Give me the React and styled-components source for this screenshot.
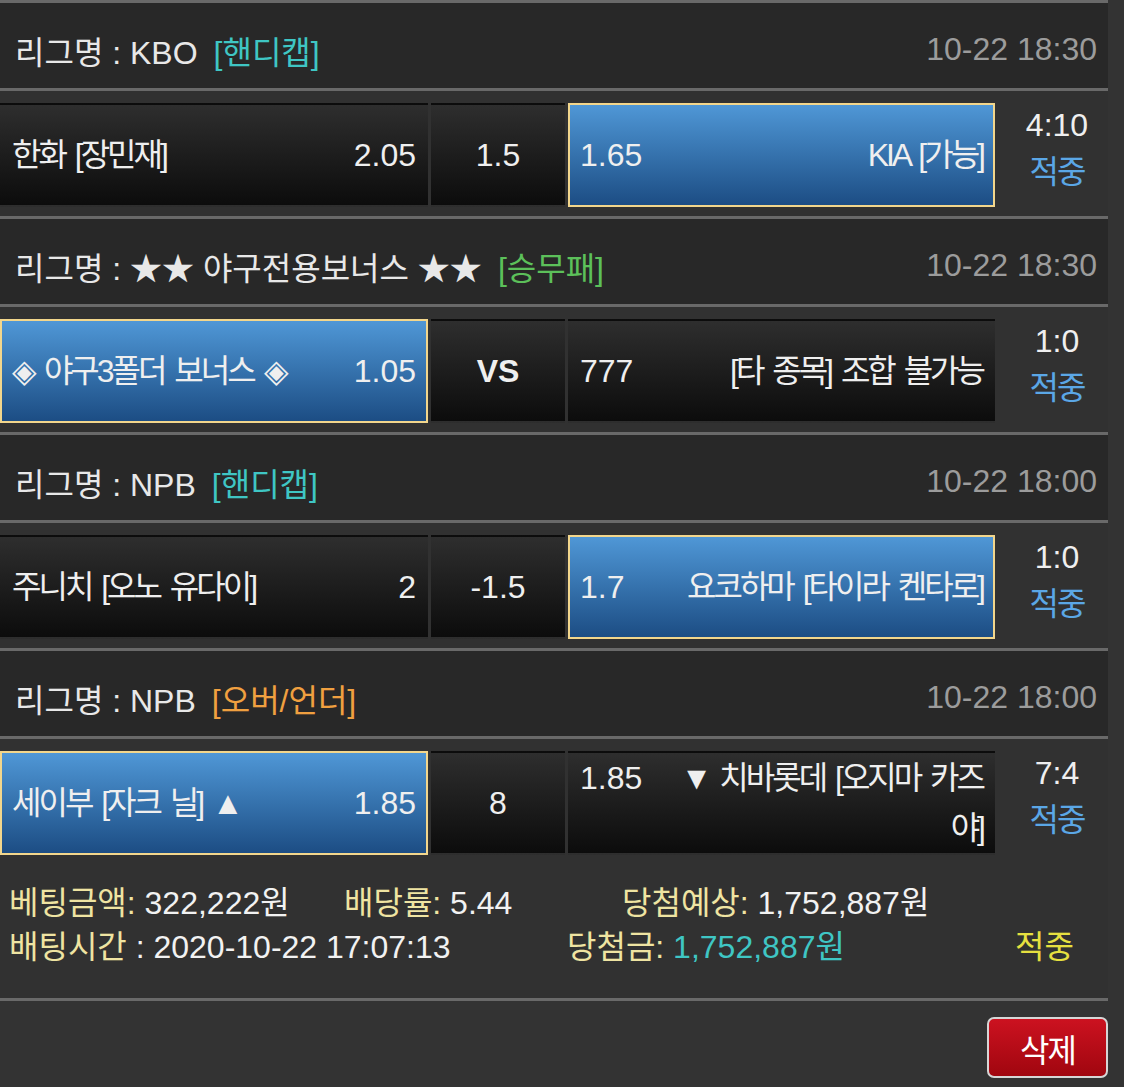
import React from "react";
import styled, { createGlobalStyle, css } from "styled-components";

const Global = createGlobalStyle`
  body {
    margin: 0;
    background: #333333;
    font-family: "Liberation Sans", "Noto Sans CJK KR", sans-serif;
    color: #efefef;
  }
`;

const Page = styled.div`
  width: 1108px;
  font-size: 32px;
`;

const Header = styled.div`
  display: flex;
  align-items: center;
  justify-content: space-between;
  box-sizing: border-box;
  height: 88px;
  padding: 8px 11px 0 15px;
  background: #282828;
  border-top: 3px solid #696969;
`;

const League = styled.span`
  color: #e8e8e8;
`;

const BetType = styled.span`
  color: ${(p) => p.$color};
  margin-left: 16px;
`;

const Date = styled.span`
  color: #9c9c9c;
`;

const Row = styled.div`
  display: flex;
  gap: 3px;
  padding: 12px 0 9px;
  background: #313131;
  border-top: 3px solid #696969;
`;

const Cell = styled.div`
  display: flex;
  align-items: center;
  justify-content: space-between;
  flex-shrink: 0;
  box-sizing: border-box;
  width: ${(p) => p.$w}px;
  height: 104px;
  padding: 0 10px;
  border: 2px solid transparent;
  background: linear-gradient(#2e2e2e, #0c0c0c);
  ${(p) =>
    p.$picked &&
    css`
      background: linear-gradient(#4f97d6, #1c4d84);
      border-color: #f2d68c;
    `}
`;

const Mid = styled(Cell)`
  justify-content: center;
  font-weight: ${(p) => (p.$bold ? 700 : 400)};
`;

const Pair = styled.div`
  display: flex;
  align-items: baseline;
  width: 100%;
  line-height: 50px;
`;

const Team = styled.span`
  flex: 1;
  letter-spacing: -3px;
  word-spacing: 4px;
  text-align: ${(p) => (p.$right ? "right" : "left")};
  margin-left: ${(p) => (p.$right ? "12px" : "0")};
`;

const Odds = styled.span`
  flex-shrink: 0;
`;

const Score = styled.div`
  display: flex;
  flex-direction: column;
  align-items: center;
  box-sizing: border-box;
  width: 110px;
  padding-left: 8px;
  margin-top: -1px;
  line-height: 47px;
`;

const Result = styled.span`
  color: ${(p) => p.$color};
  letter-spacing: -2px;
`;

const Summary = styled.div`
  padding: 17px 0 29px 9px;
  background: #313131;
  line-height: 44px;
`;

const SummaryLine = styled.div`
  display: flex;
`;

const Stat = styled.span`
  flex-shrink: 0;
  width: ${(p) => (p.$w ? `${p.$w}px` : "auto")};
  color: ${(p) => p.$color || "#f2f2f2"};
`;

const Label = styled.span`
  color: #efe4a2;
`;

const Footer = styled.div`
  display: flex;
  justify-content: flex-end;
  padding: 16px 0 10px;
  border-top: 3px solid #696969;
`;

const DeleteButton = styled.button`
  width: 121px;
  height: 61px;
  border: 2px solid #d6d6d6;
  border-radius: 7px;
  background: linear-gradient(#cc1220, #a0060f);
  color: #fff;
  font-family: inherit;
  font-size: 32px;
  letter-spacing: -2px;
`;

const games = [
  {
    league: "KBO",
    type: "[핸디캡]",
    typeColor: "#3fc6c4",
    date: "10-22 18:30",
    home: "한화 [장민재]",
    homeOdds: "2.05",
    mid: "1.5",
    awayOdds: "1.65",
    away: "KIA [가능]",
    pick: "away",
    score: "4:10",
  },
  {
    league: "★★ 야구전용보너스 ★★",
    type: "[승무패]",
    typeColor: "#5cc05a",
    date: "10-22 18:30",
    home: "◈ 야구3폴더 보너스 ◈",
    homeOdds: "1.05",
    mid: "VS",
    bold: true,
    awayOdds: "777",
    away: "[타 종목] 조합 불가능",
    pick: "home",
    score: "1:0",
  },
  {
    league: "NPB",
    type: "[핸디캡]",
    typeColor: "#3fc6c4",
    date: "10-22 18:00",
    home: "주니치 [오노 유다이]",
    homeOdds: "2",
    mid: "-1.5",
    awayOdds: "1.7",
    away: "요코하마 [타이라 켄타로]",
    pick: "away",
    score: "1:0",
  },
  {
    league: "NPB",
    type: "[오버/언더]",
    typeColor: "#f0a040",
    date: "10-22 18:00",
    home: "세이부 [자크 닐] ▲",
    homeOdds: "1.85",
    mid: "8",
    awayOdds: "1.85",
    away: "▼ 치바롯데 [오지마 카즈야]",
    pick: "home",
    score: "7:4",
  },
];

const App = () => {
  return (
    <Page>
      <Global />
      {games.map((g, i) => (
        <React.Fragment key={i}>
          <Header>
            <span>
              <League>리그명 : {g.league}</League>
              <BetType $color={g.typeColor}>{g.type}</BetType>
            </span>
            <Date>{g.date}</Date>
          </Header>
          <Row>
            <Cell $w={428} $picked={g.pick === "home"}>
              <Pair>
                <Team>{g.home}</Team>
                <Odds>{g.homeOdds}</Odds>
              </Pair>
            </Cell>
            <Mid $w={134} $bold={g.bold}>
              {g.mid}
            </Mid>
            <Cell $w={427} $picked={g.pick === "away"}>
              <Pair>
                <Odds>{g.awayOdds}</Odds>
                <Team $right>{g.away}</Team>
              </Pair>
            </Cell>
            <Score>
              <span>{g.score}</span>
              <Result $color="#5ba7e6">적중</Result>
            </Score>
          </Row>
        </React.Fragment>
      ))}
      <Summary>
        <SummaryLine>
          <Stat $w={335}>
            <Label>베팅금액:</Label> 322,222원
          </Stat>
          <Stat $w={278}>
            <Label>배당률:</Label> 5.44
          </Stat>
          <Stat>
            <Label>당첨예상:</Label> 1,752,887원
          </Stat>
        </SummaryLine>
        <SummaryLine>
          <Stat $w={558}>
            <Label>배팅시간</Label> : 2020-10-22 17:07:13
          </Stat>
          <Stat $w={448}>
            <Label>당첨금:</Label>{" "}
            <Stat $color="#3fc6c4">1,752,887원</Stat>
          </Stat>
          <Stat $color="#e6e040">적중</Stat>
        </SummaryLine>
      </Summary>
      <Footer>
        <DeleteButton>삭제</DeleteButton>
      </Footer>
    </Page>
  );
};

export default App;
